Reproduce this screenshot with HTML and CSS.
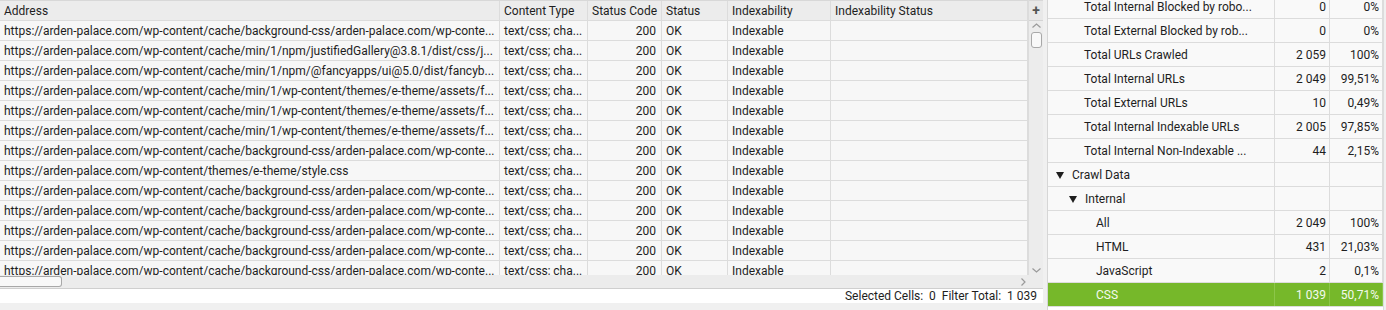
FILE: index.html
```html
<!DOCTYPE html>
<html lang="en">
<head>
    <meta charset="utf-8"/>
    <title>Crawl - CSS</title>
    <link rel="stylesheet" href="styles.css">
</head>
<body>
    <div class="left">
        <div class="grid-wrap">
            <div class="table">
                <div class="row head">
                    <div class="cell">Address</div>
                    <div class="cell">Content Type</div>
                    <div class="cell">Status Code</div>
                    <div class="cell">Status</div>
                    <div class="cell">Indexability</div>
                    <div class="cell">Indexability Status</div>
                </div>
                <div class="row">
                    <div class="cell">https://arden-palace.com/wp-content/cache/background-css/arden-palace.com/wp-conte...</div>
                    <div class="cell">text/css; cha...</div><div class="cell num">200</div><div class="cell">OK</div><div class="cell">Indexable</div><div class="cell"></div>
                </div>
                <div class="row">
                    <div class="cell">https://arden-palace.com/wp-content/cache/min/1/npm/justifiedGallery@3.8.1/dist/css/j...</div>
                    <div class="cell">text/css; cha...</div><div class="cell num">200</div><div class="cell">OK</div><div class="cell">Indexable</div><div class="cell"></div>
                </div>
                <div class="row">
                    <div class="cell">https://arden-palace.com/wp-content/cache/min/1/npm/@fancyapps/ui@5.0/dist/fancyb...</div>
                    <div class="cell">text/css; cha...</div><div class="cell num">200</div><div class="cell">OK</div><div class="cell">Indexable</div><div class="cell"></div>
                </div>
                <div class="row">
                    <div class="cell">https://arden-palace.com/wp-content/cache/min/1/wp-content/themes/e-theme/assets/f...</div>
                    <div class="cell">text/css; cha...</div><div class="cell num">200</div><div class="cell">OK</div><div class="cell">Indexable</div><div class="cell"></div>
                </div>
                <div class="row">
                    <div class="cell">https://arden-palace.com/wp-content/cache/min/1/wp-content/themes/e-theme/assets/f...</div>
                    <div class="cell">text/css; cha...</div><div class="cell num">200</div><div class="cell">OK</div><div class="cell">Indexable</div><div class="cell"></div>
                </div>
                <div class="row">
                    <div class="cell">https://arden-palace.com/wp-content/cache/min/1/wp-content/themes/e-theme/assets/f...</div>
                    <div class="cell">text/css; cha...</div><div class="cell num">200</div><div class="cell">OK</div><div class="cell">Indexable</div><div class="cell"></div>
                </div>
                <div class="row">
                    <div class="cell">https://arden-palace.com/wp-content/cache/background-css/arden-palace.com/wp-conte...</div>
                    <div class="cell">text/css; cha...</div><div class="cell num">200</div><div class="cell">OK</div><div class="cell">Indexable</div><div class="cell"></div>
                </div>
                <div class="row">
                    <div class="cell">https://arden-palace.com/wp-content/themes/e-theme/style.css</div>
                    <div class="cell">text/css; cha...</div><div class="cell num">200</div><div class="cell">OK</div><div class="cell">Indexable</div><div class="cell"></div>
                </div>
                <div class="row">
                    <div class="cell">https://arden-palace.com/wp-content/cache/background-css/arden-palace.com/wp-conte...</div>
                    <div class="cell">text/css; cha...</div><div class="cell num">200</div><div class="cell">OK</div><div class="cell">Indexable</div><div class="cell"></div>
                </div>
                <div class="row">
                    <div class="cell">https://arden-palace.com/wp-content/cache/background-css/arden-palace.com/wp-conte...</div>
                    <div class="cell">text/css; cha...</div><div class="cell num">200</div><div class="cell">OK</div><div class="cell">Indexable</div><div class="cell"></div>
                </div>
                <div class="row">
                    <div class="cell">https://arden-palace.com/wp-content/cache/background-css/arden-palace.com/wp-conte...</div>
                    <div class="cell">text/css; cha...</div><div class="cell num">200</div><div class="cell">OK</div><div class="cell">Indexable</div><div class="cell"></div>
                </div>
                <div class="row">
                    <div class="cell">https://arden-palace.com/wp-content/cache/background-css/arden-palace.com/wp-conte...</div>
                    <div class="cell">text/css; cha...</div><div class="cell num">200</div><div class="cell">OK</div><div class="cell">Indexable</div><div class="cell"></div>
                </div>
                <div class="row">
                    <div class="cell">https://arden-palace.com/wp-content/cache/background-css/arden-palace.com/wp-conte...</div>
                    <div class="cell">text/css; cha...</div><div class="cell num">200</div><div class="cell">OK</div><div class="cell">Indexable</div><div class="cell"></div>
                </div>
            </div>
            <div class="vscroll">
                <div class="plus">+</div>
                <svg class="arrow" width="15" height="10" viewBox="0 0 15 10"><path d="M3.5 6.5 L7.5 3 L11.5 6.5" fill="none" stroke="#9a9a9a" stroke-width="1.2"/></svg>
                <div class="vthumb"></div>
                <div class="spacer"></div>
                <svg class="arrow" width="15" height="10" viewBox="0 0 15 10"><path d="M3.5 3.5 L7.5 7 L11.5 3.5" fill="none" stroke="#9a9a9a" stroke-width="1.2"/></svg>
            </div>
        </div>
        <div class="hbar">
            <div class="hscroll">
                <div class="hthumb"></div>
                <svg class="harrow" width="10" height="12" viewBox="0 0 10 12"><path d="M3.5 2.5 L7 6 L3.5 9.5" fill="none" stroke="#9a9a9a" stroke-width="1.2"/></svg>
            </div>
            <div class="corner"></div>
        </div>
        <div class="status">Selected Cells:&nbsp; 0&nbsp; Filter Total:&nbsp; 1 039</div>
    </div>
    <div class="divider"></div>
    <div class="summary">
        <div class="summary-inner">
            <div class="srow"><div class="scell lv1">Total Internal Blocked by robo...</div><div class="scell num">0</div><div class="scell num">0%</div></div>
            <div class="srow"><div class="scell lv1">Total External Blocked by rob...</div><div class="scell num">0</div><div class="scell num">0%</div></div>
            <div class="srow"><div class="scell lv1">Total URLs Crawled</div><div class="scell num">2 059</div><div class="scell num">100%</div></div>
            <div class="srow"><div class="scell lv1">Total Internal URLs</div><div class="scell num">2 049</div><div class="scell num">99,51%</div></div>
            <div class="srow"><div class="scell lv1">Total External URLs</div><div class="scell num">10</div><div class="scell num">0,49%</div></div>
            <div class="srow"><div class="scell lv1">Total Internal Indexable URLs</div><div class="scell num">2 005</div><div class="scell num">97,85%</div></div>
            <div class="srow"><div class="scell lv1">Total Internal Non-Indexable ...</div><div class="scell num">44</div><div class="scell num">2,15%</div></div>
            <div class="srow"><div class="scell lv0"><span class="tri"></span>Crawl Data</div><div class="scell"></div><div class="scell"></div></div>
            <div class="srow"><div class="scell lv1t"><span class="tri"></span>Internal</div><div class="scell"></div><div class="scell"></div></div>
            <div class="srow"><div class="scell lv2">All</div><div class="scell num">2 049</div><div class="scell num">100%</div></div>
            <div class="srow"><div class="scell lv2">HTML</div><div class="scell num">431</div><div class="scell num">21,03%</div></div>
            <div class="srow"><div class="scell lv2">JavaScript</div><div class="scell num">2</div><div class="scell num">0,1%</div></div>
            <div class="srow selected"><div class="scell lv2">CSS</div><div class="scell num">1 039</div><div class="scell num">50,71%</div></div>
        </div>
    </div>
</body>
</html>
```

FILE: styles.css
```css
* {
    box-sizing: border-box;
}

body {
    margin: 0;
    height: 310px;
    overflow: hidden;
    display: flex;
    background-color: #f0f0f0;
    font-family: Roboto, "Liberation Sans", sans-serif;
    font-size: 12px;
    color: #1e1e1e;
}

.left {
    width: 1043px;
    height: 303px;
    display: flex;
    flex-direction: column;
    background-color: #ffffff;
}

.grid-wrap {
    height: 275px;
    flex-shrink: 0;
    display: flex;
    overflow: hidden;
}

.table {
    width: 1028px;
    overflow: hidden;
    background-color: #f7f7f7;
}

.row {
    display: grid;
    grid-template-columns: 500px 88px 74px 66px 103px 197px;
    height: 20px;
    border-bottom: 1px solid #dcdcdc;
}

.row.head {
    height: 21px;
    background-color: #ececec;
    border-top: 1px solid #d8d8d8;
}

.cell {
    padding: 1px 4px 0;
    line-height: 19px;
    white-space: nowrap;
    overflow: hidden;
    border-right: 1px solid #dcdcdc;
}

.head .cell {
    line-height: 19px;
    padding-top: 1px;
}

.cell.num {
    text-align: right;
    padding-right: 5px;
}

.vscroll {
    width: 15px;
    display: flex;
    flex-direction: column;
    align-items: center;
    background-color: #ececec;
    border-left: 1px solid #dcdcdc;
}

.plus {
    width: 15px;
    height: 21px;
    flex-shrink: 0;
    line-height: 19px;
    text-align: center;
    font-size: 14px;
    font-weight: bold;
    color: #555;
    border-top: 1px solid #d8d8d8;
    border-bottom: 1px solid #d4d4d4;
    background-color: #e8e8e8;
}

.vthumb {
    width: 11px;
    height: 16px;
    flex-shrink: 0;
    margin-top: 1px;
    border: 1px solid #a8a8a8;
    border-radius: 3px;
    background-color: #f8f8f8;
}

.spacer {
    flex: 1;
}

.arrow {
    display: block;
    flex-shrink: 0;
}

.hbar {
    height: 14px;
    flex-shrink: 0;
    display: flex;
    border-bottom: 1px solid #cfcfcf;
}

.hscroll {
    flex: 1;
    display: flex;
    align-items: center;
    justify-content: space-between;
    background-color: #ececec;
}

.hthumb {
    width: 62px;
    height: 11px;
    border: 1px solid #a8a8a8;
    border-left: none;
    border-radius: 0 3px 3px 0;
    background-color: #f8f8f8;
}

.harrow {
    display: block;
}

.corner {
    width: 15px;
    background-color: #ececec;
}

.status {
    height: 14px;
    line-height: 15px;
    text-align: right;
    padding-right: 6px;
    background-color: #ffffff;
}

.divider {
    width: 5px;
    background-color: #f0f0f0;
    border-right: 1px solid #d6d6d6;
}

.summary {
    width: 336px;
    height: 310px;
    overflow: hidden;
    background-color: #ffffff;
    border-right: 1px solid #dcdcdc;
}

.summary-inner {
    margin-top: -5px;
}

.srow {
    display: grid;
    grid-template-columns: 227px 55px 53px;
    height: 24px;
    border-bottom: 1px solid #dcdcdc;
    background-color: #f9f9f9;
}

.scell {
    padding-top: 1px;
    line-height: 22px;
    white-space: nowrap;
    overflow: hidden;
    border-right: 1px solid #dcdcdc;
}

.scell.num {
    text-align: right;
    padding-right: 3px;
}

.lv0 {
    padding-left: 8px;
}

.lv1 {
    padding-left: 36px;
}

.lv1t {
    padding-left: 21px;
}

.lv2 {
    padding-left: 48px;
}

.tri {
    display: inline-block;
    width: 0;
    height: 0;
    margin-right: 8px;
    vertical-align: middle;
    border-left: 4px solid transparent;
    border-right: 4px solid transparent;
    border-top: 7px solid #1e1e1e;
}

.srow.selected {
    background-color: #76b82a;
    color: #f4faee;
}

.srow.selected .scell {
    border-right-color: #8cc64a;
}
```
